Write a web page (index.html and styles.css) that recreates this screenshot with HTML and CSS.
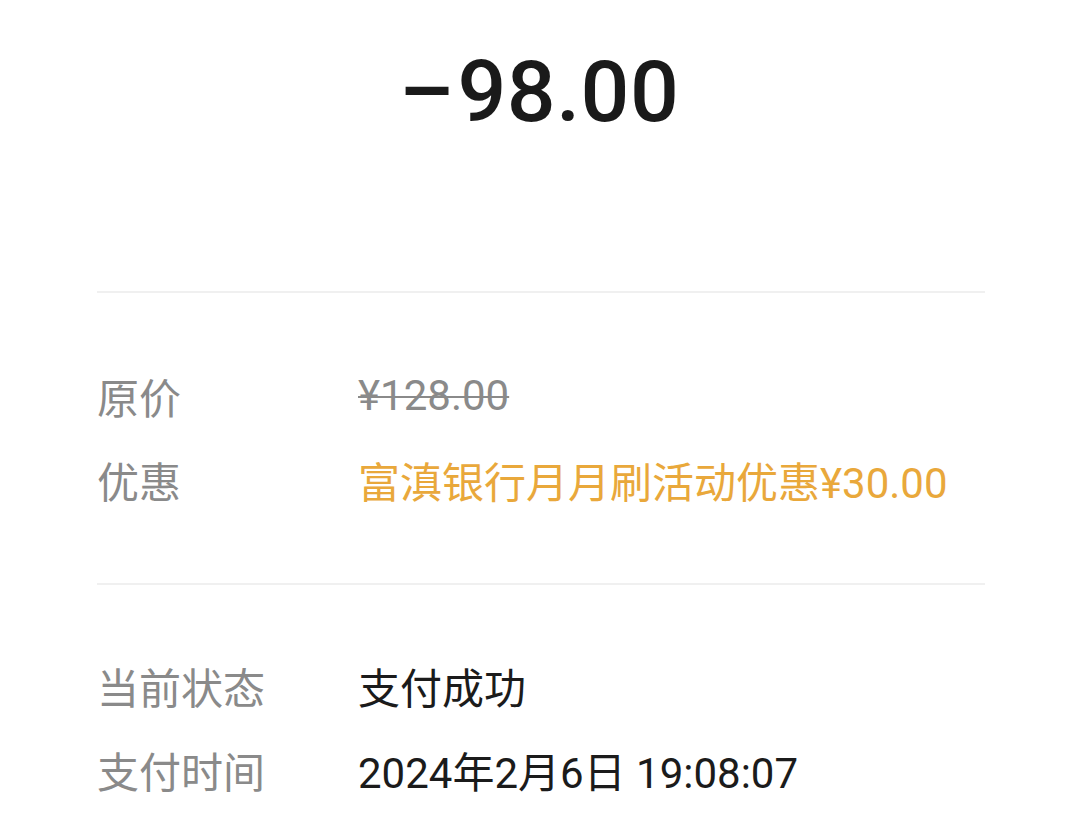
FILE: index.html
```html
<!DOCTYPE html>
<html lang="zh-CN">
<head>
<meta charset="utf-8">
<link rel="stylesheet" href="styles.css">
</head>
<body>
<div class="page">
  <div class="amount"><span class="minus">−</span>98.00</div>
  <div class="divider"></div>
  <div class="section first">
    <div class="row"><div class="label">原价</div><div class="value strike">¥128.00</div></div>
    <div class="row"><div class="label">优惠</div><div class="value promo">富滇银行月月刷活动优惠¥30.00</div></div>
  </div>
  <div class="divider"></div>
  <div class="section second">
    <div class="row"><div class="label">当前状态</div><div class="value">支付成功</div></div>
    <div class="row"><div class="label">支付时间</div><div class="value">2024年2月6日 19:08:07</div></div>
  </div>
</div>
</body>
</html>
```
FILE: styles.css
```css
html, body {
  margin: 0;
  padding: 0;
  background: #ffffff;
}
body {
  font-family: Roboto, "Noto Sans CJK SC", sans-serif;
  color: #1b1b1b;
}
.page {
  width: 1080px;
  height: 830px;
  overflow: hidden;
  padding: 0 95px 0 97px;
  box-sizing: border-box;
}
.amount {
  text-align: center;
  font-size: 86px;
  font-weight: 500;
  line-height: 100px;
  padding-top: 42px;
  height: 291px;
  box-sizing: border-box;
  color: #1a1a1a;
  letter-spacing: 0.5px;
}
.minus {
  display: inline-block;
  transform: scaleX(1.2);
  margin-right: 6px;
}
.divider {
  height: 2px;
  background: #f0f0f0;
}
.section.first {
  padding: 60px 0 62px;
}
.section.second {
  padding: 58px 0 0;
}
.row {
  display: flex;
  align-items: center;
  height: 84px;
  font-size: 42px;
}
.label {
  width: 261px;
  flex: none;
  color: #8a8a8a;
  font-family: "Noto Sans CJK SC", sans-serif;
}
.value {
  color: #1b1b1b;
}
.strike {
  color: #8a8a8a;
  text-decoration: line-through;
  text-decoration-thickness: 2px;
}
.promo {
  color: #e9a83b;
}
```
